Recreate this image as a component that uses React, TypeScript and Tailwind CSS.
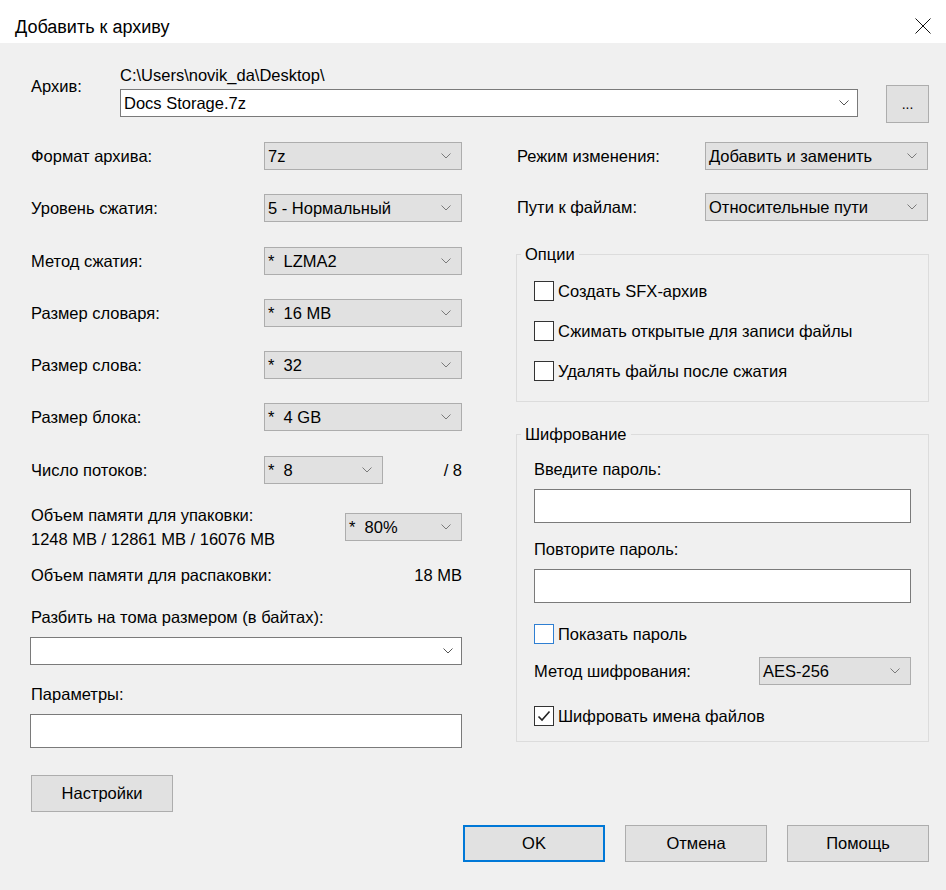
import React from 'react';

const Chevron: React.FC<{ color?: string }> = ({ color = '#606060' }) => (
    <svg width="10" height="6" viewBox="0 0 10 6" className="shrink-0">
        <polyline points="0.5,0.5 5,5 9.5,0.5" fill="none" stroke={color} strokeWidth="1" />
    </svg>
);

const Select: React.FC<{ value: string; className?: string }> = ({ value, className = '' }) => (
    <div className={`flex items-center justify-between h-[28px] bg-[#e1e1e1] border border-[#adadad] pl-[3px] pr-[10px] ${className}`}>
        <span className="whitespace-pre leading-[20px]">{value}</span>
        <Chevron color="#7a7a7a" />
    </div>
);

const Combo: React.FC<{ value?: string; className?: string }> = ({ value = '', className = '' }) => (
    <div className={`flex items-center justify-between h-[28px] bg-white border border-[#7a7a7a] pl-[3px] pr-[8px] ${className}`}>
        <span className="leading-[20px]">{value}</span>
        <Chevron color="#555555" />
    </div>
);

const TextInput: React.FC<{ className?: string }> = ({ className = '' }) => (
    <div className={`h-[34px] bg-white border border-[#7a7a7a] ${className}`} />
);

const Checkbox: React.FC<{ label: string; checked?: boolean; focused?: boolean; className?: string }> = ({
    label,
    checked,
    focused,
    className = ''
}) => (
    <div className={`flex items-center h-[20px] ${className}`}>
        <div
            className={`w-[20px] h-[20px] shrink-0 bg-white border flex items-center justify-center ${
                focused ? 'border-[#2f7fd2]' : 'border-[#333333]'
            }`}
        >
            {checked && (
                <svg width="16" height="16" viewBox="0 0 16 16">
                    <polyline points="2.5,8.5 6,12 13.5,3.5" fill="none" stroke="#222222" strokeWidth="1.6" />
                </svg>
            )}
        </div>
        <span className="ml-[4px] leading-[20px] whitespace-nowrap">{label}</span>
    </div>
);

const Button: React.FC<{ label: string; primary?: boolean; className?: string }> = ({ label, primary, className = '' }) => (
    <div
        className={`flex items-center justify-center h-[37px] w-[142px] bg-[#e1e1e1] ${
            primary ? 'border-2 border-[#0078d7]' : 'border border-[#adadad]'
        } ${className}`}
    >
        {label}
    </div>
);

const Row: React.FC<{ label: string; children: React.ReactNode; className?: string }> = ({ label, children, className = '' }) => (
    <div className={`flex items-center justify-between h-[28px] ${className}`}>
        <span className="pl-[1px] leading-[20px] whitespace-nowrap">{label}</span>
        {children}
    </div>
);

export default function App() {
    return (
        <div className="w-[946px] h-[890px] bg-[#f0f0f0] text-black text-[16.5px] font-['Liberation_Sans',Arial,sans-serif] flex flex-col">
            {/* title bar */}
            <div className="h-[43px] bg-white flex items-center justify-between pt-[10px] pl-[15px] pr-[15px]">
                <span className="text-[18px] leading-[20px]">Добавить к архиву</span>
                <svg width="16" height="16" viewBox="0 0 16 16" className="-mt-[2px]">
                    <path d="M0.5 0.5 L15.5 15.5 M15.5 0.5 L0.5 15.5" stroke="#111111" strokeWidth="1" />
                </svg>
            </div>

            {/* archive path */}
            <div className="flex items-start mt-[22px] pl-[31px]">
                <span className="w-[89px] mt-[11px] leading-[20px]">Архив:</span>
                <div className="flex flex-col">
                    <span className="leading-[20px]">C:\Users\novik_da\Desktop\</span>
                    <Combo value="Docs Storage.7z" className="w-[738px] mt-[4px]" />
                </div>
                <div className="ml-[28px] mt-[20px] w-[43px] h-[38px] bg-[#e1e1e1] border border-[#adadad] flex items-center justify-center text-[14px]">
                    ...
                </div>
            </div>

            <div className="flex mt-[19px] pl-[30px]">
                {/* left column */}
                <div className="w-[432px] flex flex-col">
                    <Row label="Формат архива:">
                        <Select value="7z" className="w-[198px]" />
                    </Row>
                    <Row label="Уровень сжатия:" className="mt-[24px]">
                        <Select value="5 - Нормальный" className="w-[198px]" />
                    </Row>
                    <Row label="Метод сжатия:" className="mt-[25px]">
                        <Select value="*  LZMA2" className="w-[198px]" />
                    </Row>
                    <Row label="Размер словаря:" className="mt-[24px]">
                        <Select value="*  16 MB" className="w-[198px]" />
                    </Row>
                    <Row label="Размер слова:" className="mt-[24px]">
                        <Select value="*  32" className="w-[198px]" />
                    </Row>
                    <Row label="Размер блока:" className="mt-[24px]">
                        <Select value="*  4 GB" className="w-[198px]" />
                    </Row>
                    <div className="flex items-center h-[28px] mt-[25px]">
                        <span className="w-[234px] pl-[1px] leading-[20px]">Число потоков:</span>
                        <Select value="*  8" className="w-[119px]" />
                        <span className="flex-1 text-right leading-[20px]">/ 8</span>
                    </div>
                    <div className="flex items-center justify-between mt-[19px]">
                        <div className="flex flex-col pl-[1px] leading-[24px]">
                            <span>Объем памяти для упаковки:</span>
                            <span>1248 MB / 12861 MB / 16076 MB</span>
                        </div>
                        <Select value="*  80%" className="w-[117px]" />
                    </div>
                    <div className="flex justify-between mt-[12px] leading-[24px] pl-[1px]">
                        <span>Объем памяти для распаковки:</span>
                        <span>18 MB</span>
                    </div>
                    <span className="mt-[18px] pl-[1px] leading-[24px]">Разбить на тома размером (в байтах):</span>
                    <Combo className="w-[432px] mt-[8px]" />
                    <span className="mt-[17px] pl-[1px] leading-[24px]">Параметры:</span>
                    <TextInput className="w-[432px] mt-[8px]" />
                    <Button label="Настройки" className="mt-[27px] ml-[1px]" />
                </div>

                {/* right column */}
                <div className="w-[413px] ml-[54px] flex flex-col">
                    <Row label="Режим изменения:">
                        <Select value="Добавить и заменить" className="w-[223px] mr-[1px]" />
                    </Row>
                    <Row label="Пути к файлам:" className="mt-[23px]">
                        <Select value="Относительные пути" className="w-[223px] mr-[1px]" />
                    </Row>

                    <fieldset className="mt-[23px] border border-[#dcdcdc] p-0 m-0 min-w-0">
                        <legend className="ml-[4px] px-[4px] leading-[20px]">Опции</legend>
                        <div className="flex flex-col pt-[17px] pb-[20px] pl-[17px]">
                            <Checkbox label="Создать SFX-архив" />
                            <Checkbox label="Сжимать открытые для записи файлы" className="mt-[20px]" />
                            <Checkbox label="Удалять файлы после сжатия" className="mt-[20px]" />
                        </div>
                    </fieldset>

                    <fieldset className="mt-[22px] border border-[#dcdcdc] p-0 m-0 min-w-0">
                        <legend className="ml-[4px] px-[4px] leading-[20px]">Шифрование</legend>
                        <div className="flex flex-col pt-[15px] pb-[15px] pl-[17px] pr-[17px]">
                            <span className="leading-[20px]">Введите пароль:</span>
                            <TextInput className="mt-[10px]" />
                            <span className="mt-[16px] leading-[20px]">Повторите пароль:</span>
                            <TextInput className="mt-[10px]" />
                            <Checkbox label="Показать пароль" focused className="mt-[21px]" />
                            <div className="flex items-center justify-between h-[28px] mt-[13px]">
                                <span className="leading-[20px]">Метод шифрования:</span>
                                <Select value="AES-256" className="w-[152px]" />
                            </div>
                            <Checkbox label="Шифровать имена файлов" checked className="mt-[21px]" />
                        </div>
                    </fieldset>
                </div>
            </div>

            {/* dialog buttons */}
            <div className="flex justify-end gap-[20px] pr-[17px] mt-[13px]">
                <Button label="OK" primary />
                <Button label="Отмена" />
                <Button label="Помощь" />
            </div>
        </div>
    );
}
